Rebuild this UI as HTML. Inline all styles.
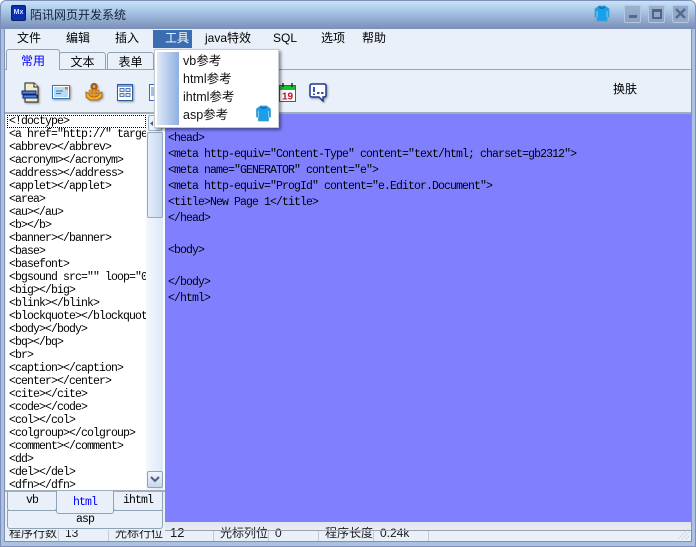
<!DOCTYPE html>
<html><head><meta charset="utf-8">
<style>
html,body{margin:0;padding:0;width:696px;height:547px;overflow:hidden;background:#fff}
*{box-sizing:border-box}
.a{position:absolute}
body{font-family:"Liberation Sans","Noto Sans CJK SC",sans-serif;font-size:12px;color:#000}
#win{position:absolute;left:0;top:0;width:696px;height:547px;background:#a9c2e0;border:1px solid #7d8fb8;border-radius:6px 6px 0 0;overflow:hidden}
.t{position:absolute;white-space:pre;line-height:16px}
.m{top:30px;font-size:12px;line-height:16px;white-space:pre;position:absolute}
.mono{font-family:"Liberation Mono","Noto Serif CJK SC",monospace;font-size:11.5px;letter-spacing:-.9px;white-space:pre;position:absolute}
.tab{position:absolute;border:1px solid #8fa3b3;border-radius:3px 3px 0 0;background:#eaf0f9;text-align:center;font-size:12px;line-height:19px}
.bt{position:absolute;border:1px solid #8ea3b5;background:#eaf0f9;text-align:center;font-family:"Liberation Mono",monospace;font-size:11.5px;letter-spacing:-.9px;line-height:15px}
.st{position:absolute;font-size:12px;line-height:14px;white-space:pre;color:#1a1a1a}
.sp{position:absolute;top:530px;width:1px;height:11px;background:#c5ccd8}
svg.i{filter:drop-shadow(1px 1px 1px rgba(0,0,0,.4))}
</style></head><body>
<div id="win"></div>
<!-- title -->
<div class="a" style="left:1px;top:1px;width:694px;height:28px;background:linear-gradient(#c9e2f7 0,#a9c8e8 35%,#8ba3c9 75%,#7b8fb8 100%);border-radius:5px 5px 0 0"></div>
<div class="a" style="left:11px;top:5px;width:15px;height:16px;background:#0a2fb0;border:1px solid #06205f;border-radius:2px;color:#dfe8ff;font-size:7px;line-height:13px;text-align:center;font-weight:bold">Mx</div>
<div class="t" style="left:30px;top:7px;font-size:12px;color:#14233b">陌讯网页开发系统</div>
<svg class="a" style="left:594px;top:5px" width="16" height="17" viewBox="0 0 16 17"><path d="M5 1h6l4 3v8l-2 0v4H3v-4l-2 0V4z" fill="#1b9fea" stroke="#4a9ccc" stroke-width=".8"/><path d="M5 1q3 3 6 0v2q-3 2-6 0z" fill="#0d6fb5"/><path d="M3 6v6M13 6v6" stroke="#7fd0f5"/></svg>
<!-- window buttons -->
<div class="a" style="left:624px;top:5px;width:17px;height:18px;background:linear-gradient(#9db2d0,#8aa0c2);border:1px solid #b7c7dd;border-radius:2px"><div class="a" style="left:4px;top:9px;width:8px;height:3px;background:#56698f"></div></div>
<div class="a" style="left:648px;top:5px;width:17px;height:18px;background:linear-gradient(#9db2d0,#8aa0c2);border:1px solid #b7c7dd;border-radius:2px"><div class="a" style="left:3px;top:3px;width:10px;height:10px;border:2px solid #50638b;border-top-width:3px"></div></div>
<svg class="a" style="left:672px;top:5px" width="17" height="18" viewBox="0 0 17 18"><rect x=".5" y=".5" width="16" height="17" rx="2" fill="#93a9c9" stroke="#b7c7dd"/><path d="M4 4l9 9M13 4l-9 9" stroke="#56698f" stroke-width="2.4"/></svg>
<!-- body area -->
<div class="a" style="left:5px;top:29px;width:686px;height:512px;background:#eaf0f9"></div>
<div class="a" style="left:691px;top:29px;width:1px;height:513px;background:#7f90b6"></div>
<div class="a" style="left:4px;top:29px;width:1px;height:513px;background:#7f90b6"></div>
<div class="a" style="left:4px;top:541px;width:688px;height:1px;background:#7f90b6"></div>
<div class="a" style="left:5px;top:69px;width:686px;height:1px;background:#95a5b9"></div>
<div class="a" style="left:5px;top:112px;width:686px;height:2px;background:#a3aebd"></div>
<!-- menu -->
<div class="a" style="left:153px;top:30px;width:39px;height:18px;background:#3b6db3"></div>
<div class="m" style="left:17px">文件</div>
<div class="m" style="left:66px">编辑</div>
<div class="m" style="left:115px">插入</div>
<div class="m" style="left:165px;color:#fff">工具</div>
<div class="m" style="left:205px">java特效</div>
<div class="m" style="left:273px">SQL</div>
<div class="m" style="left:321px">选项</div>
<div class="m" style="left:362px">帮助</div>
<!-- tabs -->
<div class="tab" style="left:59px;top:52px;width:47px;height:18px">文本</div>
<div class="tab" style="left:107px;top:52px;width:47px;height:18px">表单</div>
<div class="tab" style="left:6px;top:49px;width:54px;height:21px;border-bottom:none;color:#00f;line-height:22px;z-index:1">常用</div>
<!-- icons -->
<svg class="a i" style="left:20px;top:82px" width="20" height="21" viewBox="0 0 20 21"><path d="M5 1h9l4 4v15H5z" fill="#f2ecc8" stroke="#222"/><path d="M14 1v4h4" fill="#fff" stroke="#222"/><path d="M2 9h14v3H2zM3 13h14v3H3z" fill="#4f84e0" stroke="#10286a"/></svg>
<svg class="a i" style="left:52px;top:85px" width="18" height="14" viewBox="0 0 18 14"><rect x=".5" y=".5" width="17" height="13" fill="#fff" stroke="#3c74b8"/><rect x="2" y="2" width="14" height="10" fill="#b5dcf6"/><path d="M4 6h7M4 8.5h5" stroke="#5c6d7d"/><rect x="13" y="2" width="3" height="2.5" fill="#e87040"/></svg>
<svg class="a i" style="left:85px;top:83px" width="18" height="19" viewBox="0 0 18 19"><circle cx="9" cy="3.5" r="2.5" fill="none" stroke="#a85a10" stroke-width="2.2"/><path d="M7 6h4v10H7zM4 7h10v3H4z" fill="#e8a020" stroke="#a85a10" stroke-width=".5"/><path d="M1 9l3 2q1 3 5 3q4 0 5-3l3-2v5l-4 3H5l-4-3z" fill="#f0b020" stroke="#a85a10" stroke-width=".8"/></svg>
<svg class="a i" style="left:117px;top:84px" width="16" height="17" viewBox="0 0 16 17"><rect x=".5" y=".5" width="15" height="16" fill="#fff" stroke="#2f5a9e"/><rect x="1" y="1" width="14" height="2" fill="#7ea3d8"/><path d="M3 4.5h4v3H3zM9 4.5h4v3H9zM3 9.5h4v3H3zM9 9.5h4v3H9z" fill="#dce8f8" stroke="#4a78b8"/></svg>
<svg class="a" style="left:279px;top:83px" width="17" height="19" viewBox="0 0 17 19"><rect x=".5" y="2.5" width="16" height="16" fill="#fff" stroke="#0a8a1a"/><rect x="1" y="3" width="15" height="4" fill="#18c030"/><path d="M4 0v4M13 0v4" stroke="#222" stroke-width="1.4"/><text x="8.5" y="16.5" text-anchor="middle" font-family="Liberation Sans" font-size="10" font-weight="bold" fill="#c0102a">19</text></svg>
<svg class="a i" style="left:309px;top:83px" width="18" height="19" viewBox="0 0 18 19"><path d="M3 1h12q2 0 2 2v9q0 2-2 2h-1v4l-4-4H3q-2 0-2-2V3q0-2 2-2z" fill="#fff" stroke="#1e3a9a" stroke-width="1.5"/><path d="M5 4v5M5 10.5v1.5M8 10h2.5M12 10h2.5" stroke="#1a3ab0" stroke-width="1.7"/></svg>
<div class="t" style="left:613px;top:81px;font-size:12px">换肤</div>
<!-- status band and text, drawn beneath the left panel -->
<div class="a" style="left:165px;top:522px;width:526px;height:8px;background:linear-gradient(#dfe4ee,#e9edf5)"></div>
<div class="st" style="left:9px;top:526px">程序行数</div>
<div class="st" style="left:65px;top:526px">13</div>
<div class="st" style="left:115px;top:526px">光标行位</div>
<div class="st" style="left:170px;top:526px;font-size:13px">12</div>
<div class="st" style="left:220px;top:526px">光标列位</div>
<div class="st" style="left:275px;top:526px">0</div>
<div class="st" style="left:325px;top:526px">程序长度</div>
<div class="st" style="left:380px;top:526px">0.24k</div>
<div class="sp" style="left:58px"></div><div class="sp" style="left:108px"></div><div class="sp" style="left:213px"></div><div class="sp" style="left:268px"></div><div class="sp" style="left:318px"></div><div class="sp" style="left:373px"></div><div class="sp" style="left:428px"></div>
<!-- left list -->
<div class="a" style="left:6px;top:114px;width:159px;height:403px;background:#fff"></div>
<div class="a" style="left:7px;top:115px;width:139px;height:13px;border:1px dotted #000"></div>
<div class="mono" style="left:9px;top:115px;width:137px;height:375px;overflow:hidden;line-height:13px">&lt;!doctype&gt;
&lt;a href="http://" target
&lt;abbrev&gt;&lt;/abbrev&gt;
&lt;acronym&gt;&lt;/acronym&gt;
&lt;address&gt;&lt;/address&gt;
&lt;applet&gt;&lt;/applet&gt;
&lt;area&gt;
&lt;au&gt;&lt;/au&gt;
&lt;b&gt;&lt;/b&gt;
&lt;banner&gt;&lt;/banner&gt;
&lt;base&gt;
&lt;basefont&gt;
&lt;bgsound src="" loop="0
&lt;big&gt;&lt;/big&gt;
&lt;blink&gt;&lt;/blink&gt;
&lt;blockquote&gt;&lt;/blockquot
&lt;body&gt;&lt;/body&gt;
&lt;bq&gt;&lt;/bq&gt;
&lt;br&gt;
&lt;caption&gt;&lt;/caption&gt;
&lt;center&gt;&lt;/center&gt;
&lt;cite&gt;&lt;/cite&gt;
&lt;code&gt;&lt;/code&gt;
&lt;col&gt;&lt;/col&gt;
&lt;colgroup&gt;&lt;/colgroup&gt;
&lt;comment&gt;&lt;/comment&gt;
&lt;dd&gt;
&lt;del&gt;&lt;/del&gt;
&lt;dfn&gt;&lt;/dfn&gt;</div>
<!-- scrollbar -->
<div class="a" style="left:146px;top:114px;width:17px;height:376px;background:linear-gradient(90deg,#f4f8fe,#dce8f8)"></div>
<div class="a" style="left:148px;top:115px;width:14px;height:16px;background:#eef3fb;border:1px solid #9fb0c4;border-radius:2px"></div>
<svg class="a" style="left:149px;top:120px" width="5" height="7" viewBox="0 0 5 7"><path d="M4 1L1 3.5 4 6z" fill="#4d5f7d"/></svg>
<div class="a" style="left:147px;top:132px;width:16px;height:86px;background:linear-gradient(90deg,#e6eef9,#c3d7ef);border:1px solid #93a8c4;border-radius:2px"></div>
<div class="a" style="left:147px;top:471px;width:16px;height:17px;background:linear-gradient(#f0f5fc,#c7d7ea);border:1px solid #8ea3bd;border-radius:2px"></div>
<svg class="a" style="left:150px;top:476px" width="10" height="7" viewBox="0 0 10 7"><path d="M1 1l4 4 4-4" fill="none" stroke="#4d5f7d" stroke-width="2"/></svg>
<!-- bottom tabs -->
<div class="a" style="left:5px;top:490px;width:160px;height:40px;background:#eaf0f9;border-top:2px solid #a3aebd"></div>
<div class="bt" style="left:7px;top:492px;width:50px;height:19px;border-radius:0 0 3px 3px;border-top:none;line-height:18px">vb</div>
<div class="bt" style="left:113px;top:492px;width:50px;height:19px;border-radius:0 0 3px 3px;border-top:none;line-height:18px">ihtml</div>
<div class="bt" style="left:56px;top:491px;width:58px;height:23px;border-radius:0 0 3px 3px;border-top:none;color:#00f;line-height:23px;z-index:1">html</div>
<div class="bt" style="left:7px;top:510px;width:156px;height:19px;border-radius:0 0 3px 3px;line-height:18px">asp</div>
<!-- editor -->
<div class="a" style="left:165px;top:114px;width:526px;height:408px;background:#8080ff"></div>
<div class="mono" style="left:168px;top:115px;line-height:16px;color:#000"><span style="visibility:hidden">&lt;html&gt;</span>
&lt;head&gt;
&lt;meta http-equiv="Content-Type" content="text/html; charset=gb2312"&gt;
&lt;meta name="GENERATOR" content="e"&gt;
&lt;meta http-equiv="ProgId" content="e.Editor.Document"&gt;
&lt;title&gt;New Page 1&lt;/title&gt;
&lt;/head&gt;

&lt;body&gt;

&lt;/body&gt;
&lt;/html&gt;</div>
<div class="a" style="left:165px;top:530px;width:526px;height:1px;background:#9aa1ad"></div>
<svg class="a" style="left:675px;top:526px" width="16" height="15" viewBox="0 0 16 15"><path d="M3 13L14 2M7 13l7-7M11 13l3-3" stroke="#c9d0da" stroke-dasharray="2 1"/></svg>
<!-- popup menu -->
<div class="a" style="left:154px;top:49px;width:125px;height:79px;background:#fff;border:1px solid #c8ccd2;box-shadow:2px 2px 3px rgba(0,0,0,.45);z-index:5">
<div class="a" style="left:2px;top:2px;width:22px;height:73px;background:linear-gradient(90deg,#dfe9f8,#8fb0e0)"></div>
<div class="t" style="left:28px;top:2px;line-height:18px;color:#111;font-size:12.5px">vb参考
html参考
ihtml参考
asp参考</div>
<svg class="a" style="left:100px;top:55px" width="17" height="17" viewBox="0 0 16 17"><path d="M5 1h6l4 3v8l-2 0v4H3v-4l-2 0V4z" fill="#1b9fea" stroke="#4a9ccc" stroke-width=".8"/><path d="M5 1q3 3 6 0v2q-3 2-6 0z" fill="#0d6fb5"/><path d="M3 6v6M13 6v6" stroke="#7fd0f5"/></svg>
</div>
<svg class="a" style="left:149px;top:84px;z-index:1" width="6" height="17" viewBox="0 0 6 17"><rect x=".5" y=".5" width="8" height="16" fill="#fff" stroke="#2a6cc8"/><rect x="2" y="3" width="4" height="9" fill="#9ac4e8"/></svg>
</body></html>
